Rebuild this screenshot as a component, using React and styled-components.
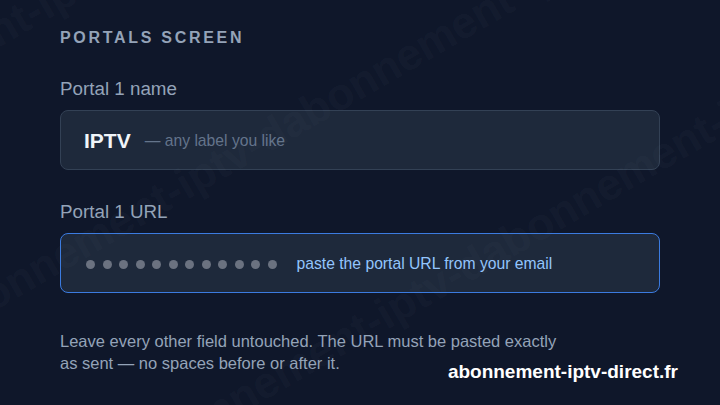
import React from "react";
import styled, { createGlobalStyle } from "styled-components";

const GlobalStyle = createGlobalStyle`
  html, body {
    margin: 0;
    padding: 0;
    background: #0f172a;
  }
  body {
    font-family: "Liberation Sans", Arial, sans-serif;
  }
`;

const Page = styled.div`
  position: relative;
  width: 720px;
  height: 405px;
  overflow: hidden;
  background: #0f172a;
  box-sizing: border-box;
  padding: 28px 60px 0 60px;
`;

const Heading = styled.div`
  font-size: 16px;
  font-weight: 700;
  letter-spacing: 2.7px;
  color: #94a3b8;
  text-transform: uppercase;
  line-height: 20px;
`;

const Label = styled.div`
  font-size: 18.8px;
  color: #94a3b8;
  line-height: 22px;
  margin-top: ${(p) => p.$top}px;
`;

const Field = styled.div`
  display: flex;
  align-items: center;
  height: 60px;
  box-sizing: border-box;
  margin-top: 10px;
  padding-top: 2px;
  padding-left: ${(p) => (p.$focused ? 25 : 23)}px;
  border-radius: 8px;
  background: #1e293b;
  border: ${(p) => (p.$focused ? "1.5px solid #3b7be0" : "1px solid #334155")};
`;

const Value = styled.span`
  font-size: 21px;
  font-weight: 700;
  color: #f1f5f9;
`;

const Hint = styled.span`
  font-size: 15.7px;
  color: ${(p) => (p.$accent ? "#93c5fd" : "#64748b")};
  margin-left: ${(p) => p.$gap}px;
`;

const Dots = styled.div`
  display: flex;
  gap: 7.5px;
  align-items: center;
`;

const Dot = styled.span`
  width: 9px;
  height: 9px;
  border-radius: 50%;
  background: #6b7280;
`;

const Note = styled.p`
  margin: 37px 0 0 0;
  width: 505px;
  font-size: 16.5px;
  line-height: 22px;
  color: #94a3b8;
`;

const Brand = styled.div`
  position: absolute;
  right: 42px;
  bottom: 22px;
  font-size: 19px;
  font-weight: 700;
  color: #ffffff;
`;

const Watermark = styled.div`
  position: absolute;
  left: ${(p) => p.$x}px;
  top: ${(p) => p.$y}px;
  transform: rotate(-30deg);
  transform-origin: left center;
  font-size: 44px;
  font-weight: 700;
  white-space: nowrap;
  color: rgba(148, 163, 184, 0.055);
  pointer-events: none;
`;

export default function App() {
  return (
    <>
      <GlobalStyle />
      <Page>
        <Heading>Portals screen</Heading>
        <Label $top={30}>Portal 1 name</Label>
        <Field>
          <Value>IPTV</Value>
          <Hint $gap={14}>— any label you like</Hint>
        </Field>
        <Label $top={31}>Portal 1 URL</Label>
        <Field $focused>
          <Dots>
            {Array.from({ length: 12 }).map((_, i) => (
              <Dot key={i} />
            ))}
          </Dots>
          <Hint $accent $gap={20}>paste the portal URL from your email</Hint>
        </Field>
        <Note>
          Leave every other field untouched. The URL must be pasted exactly as
          sent — no spaces before or after it.
        </Note>
        <Watermark $x={-60} $y={300}>abonnement-iptv-dabonnement-iptv-dabonnement</Watermark>
        <Watermark $x={140} $y={430}>abonnement-iptv-dabonnement-iptv-dabonnement</Watermark>
        <Watermark $x={-200} $y={120}>abonnement-iptv-dabonnement-iptv-dabonnement</Watermark>
        <Brand>abonnement-iptv-direct.fr</Brand>
      </Page>
    </>
  );
}
